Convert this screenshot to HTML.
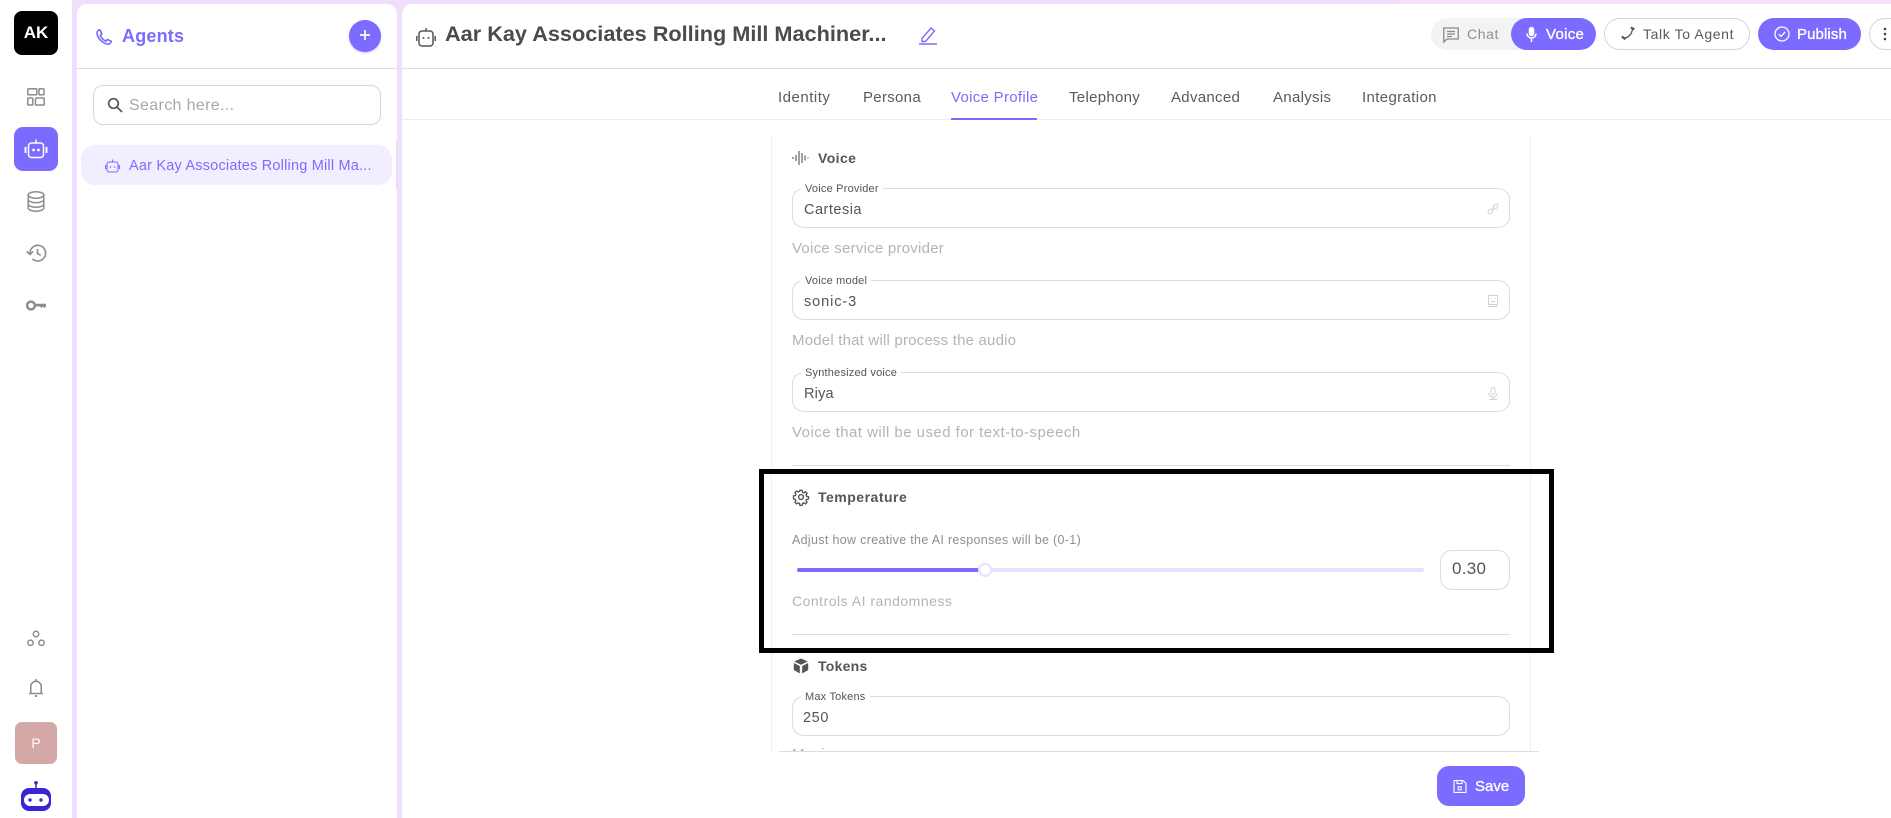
<!DOCTYPE html>
<html><head><meta charset="utf-8"><style>
html,body{margin:0;padding:0;width:1891px;height:818px;overflow:hidden;background:#fff;font-family:"Liberation Sans",sans-serif}
#r{position:absolute;left:0;top:0;width:1891px;height:818px;overflow:hidden;background:#fff}
.a{position:absolute;box-sizing:border-box}
.t{position:absolute;white-space:nowrap;line-height:20px;height:20px}
svg{position:absolute;overflow:visible;fill:none}
.f{position:absolute;left:792px;width:718px;height:40px;border:1px solid #dcdcdc;border-radius:12px;box-sizing:border-box;background:#fff}
.l{position:absolute;left:801px;background:#fff;padding:0 4px;font-size:11px;line-height:12px;color:#555;white-space:nowrap;letter-spacing:.2px}
.v{font-size:14.5px;color:#555;letter-spacing:.5px}
.h{font-size:15px;color:#b4b4b4}
.s{font-size:14px;font-weight:bold;color:#555}
.tab{font-size:15px;color:#5a5a5a;letter-spacing:.3px}
.w{font-size:15px;color:#fff;-webkit-text-stroke:.35px #fff}
</style></head><body><div id="r">
<div class="a" style="left:72px;top:0;width:1819px;height:818px;background:#efdffc"></div>
<div class="a" style="left:1400px;top:0;width:491px;height:4px;background:#f7e0fb"></div>
<div class="a" style="left:0;top:0;width:72px;height:818px;background:#fff"></div>
<div class="a" style="left:72px;top:0;width:20px;height:20px;background:#efdffc;border-radius:12px 0 0 0"></div>
<div class="a" style="left:77px;top:4px;width:320px;height:814px;background:#fff;border-radius:10px 10px 0 0"></div>
<div class="a" style="left:402px;top:4px;width:1489px;height:814px;background:#fff;border-radius:10px 0 0 0"></div>

<!-- rail -->
<div class="a" style="left:14px;top:11px;width:44px;height:44px;background:#000;border-radius:8px"></div>
<div class="t" style="left:14px;width:44px;top:23px;text-align:center;color:#fff;font-weight:bold;font-size:17px">AK</div>
<svg style="left:27px;top:88px" width="18" height="18" viewBox="0 0 18 18" stroke="#8c8c8c" stroke-width="1.5"><rect x=".8" y=".8" width="9" height="6" rx=".8"/><rect x="12" y=".8" width="5" height="6" rx=".8"/><rect x=".8" y="10" width="5" height="7" rx=".8"/><rect x="8.5" y="10" width="8.7" height="7" rx=".8"/></svg>
<div class="a" style="left:14px;top:127px;width:44px;height:44px;background:#7b6cff;border-radius:9px"></div>
<svg style="left:24px;top:138px" width="24" height="22" viewBox="0 0 24 22" stroke="#fff" stroke-width="1.5"><rect x="4.5" y="5" width="15" height="14.5" rx="3"/><path d="M12 5V1.5"/><path d="M1.5 9v6M22.5 9v6" stroke-width="2"/><circle cx="9.600" cy="12" r="1.400" fill="#fff" stroke="none"/><circle cx="14.400" cy="12" r="1.400" fill="#fff" stroke="none"/></svg>
<svg style="left:27px;top:191px" width="18" height="21" viewBox="0 0 18 21" stroke="#8c8c8c" stroke-width="1.5"><ellipse cx="9" cy="4" rx="7.8" ry="3.2"/><path d="M1.2 4v13c0 1.8 3.5 3.2 7.8 3.2s7.8-1.4 7.8-3.2V4M1.2 8.500c0 1.800 3.500 3.200 7.800 3.200s7.800-1.400 7.800-3.200M1.200 13c0 1.800 3.500 3.200 7.800 3.200s7.800-1.400 7.800-3.200"/></svg>
<svg style="left:26px;top:244px" width="20" height="18" viewBox="0 0 20 18" stroke="#8c8c8c" stroke-width="1.6"><path d="M4 9a7.800 7.800 0 1 1 2.400 5.800"/><path d="M.8 7.500L4 10.500 7 7.500" /><path d="M11.500 5v4.500l3.200 1.800"/></svg>
<svg style="left:26px;top:299px" width="20" height="12" viewBox="0 0 20 12"><circle cx="5" cy="6.500" r="3.900" stroke="#8c8c8c" stroke-width="2.500"/><path d="M8.500 4.700h11.500V7.500l-1.500 1.500-1.500-1.500-1.500 1.500-1.500-1.500H8.500z" fill="#8c8c8c"/></svg>
<svg style="left:27px;top:630px" width="18" height="17" viewBox="0 0 18 17" stroke="#8c8c8c" stroke-width="1.500"><circle cx="9" cy="4" r="2.700"/><circle cx="3.500" cy="12.800" r="2.700"/><circle cx="14.500" cy="12.800" r="2.700"/></svg>
<svg style="left:28px;top:678px" width="16" height="20" viewBox="0 0 16 20" stroke="#8c8c8c" stroke-width="1.500"><path d="M1 15.500h14M2.800 15.500V8.500a5.200 5.200 0 0 1 10.400 0v7M8 1v2"/><path d="M7 18h2" stroke-width="2"/></svg>
<div class="a" style="left:15px;top:722px;width:42px;height:42px;background:#d4a8a6;border-radius:7px"></div>
<div class="t" style="left:15px;width:42px;top:733px;text-align:center;color:#fff;font-size:14px">P</div>
<svg style="left:21px;top:781px" width="30" height="30" viewBox="0 0 30 30"><circle cx="15" cy="1.800" r="1.800" fill="#3a25d6"/><path d="M15 3v6" stroke="#3a25d6" stroke-width="1.500"/><rect x="0" y="7" width="30" height="23" rx="8" fill="#3a25d6"/><rect x="3" y="13" width="25" height="12" rx="6" fill="#fff"/><circle cx="9" cy="19" r="1.700" fill="#3a25d6"/><circle cx="20" cy="19" r="1.700" fill="#3a25d6"/></svg>

<!-- agents panel -->
<div class="a" style="left:77px;top:68px;width:320px;height:1px;background:#dedede"></div>
<svg style="left:95px;top:28px" width="18" height="18" viewBox="0 0 24 24" stroke="#7b6cff" stroke-width="2.200"><path d="M6.500 2.500c-2 .3-4 1.800-3.800 4.500C3.500 14 10 20.800 17.500 21.500c2.500.2 3.800-2 4-3.800l-4.800-2.400-2.200 2.200c-3-1.300-6-4.300-7.500-7.500l2.200-2.200z"/></svg>
<div class="t" style="left:122px;top:25px;font-size:18px;font-weight:bold;color:#7b6cff;height:22px;line-height:22px;letter-spacing:.2px">Agents</div>
<div class="a" style="left:349px;top:20px;width:32px;height:32px;border-radius:50%;background:#7b6cff;box-shadow:0 1px 2px rgba(123,108,255,.4)"></div>
<svg style="left:359px;top:29px" width="12" height="12" viewBox="0 0 12 12" stroke="#fff" stroke-width="1.700"><path d="M6 1v10M1 6h10"/></svg>
<div class="a" style="left:93px;top:85px;width:288px;height:40px;border:1px solid #d8d8d8;border-radius:10px"></div>
<svg style="left:107px;top:97px" width="16" height="16" viewBox="0 0 16 16" stroke="#555" stroke-width="1.700"><circle cx="6.500" cy="6.500" r="4.800"/><path d="M10 10l5 5"/></svg>
<div class="t" style="left:129px;top:96px;font-size:16px;color:#a8a8a8;letter-spacing:.35px">Search here...</div>
<div class="a" style="left:81px;top:145px;width:311px;height:40px;background:#f3eeff;border-radius:14px"></div>
<svg style="left:105px;top:158px" width="15" height="15" viewBox="0 0 15 15" stroke="#7b6cff" stroke-width="1.100"><rect x="2" y="4" width="11" height="10" rx="2"/><path d="M7.500 4V1.500M.6 7v4M14.400 7v4"/><circle cx="5.500" cy="9" r=".8" fill="#7b6cff" stroke="none"/><circle cx="9.500" cy="9" r=".8" fill="#7b6cff" stroke="none"/></svg>
<div class="t" style="left:129px;top:156px;font-size:14.500px;color:#7b6cff;letter-spacing:.2px">Aar Kay Associates Rolling Mill Ma...</div>
<div class="a" style="left:396px;top:141px;width:1px;height:48px;background:#e0dce4"></div>

<!-- main header -->
<div class="a" style="left:402px;top:68px;width:1489px;height:1px;background:#dedede"></div>
<div class="a" style="left:402px;top:119px;width:1489px;height:1px;background:#ececec"></div>
<svg style="left:416px;top:26px" width="20" height="20" viewBox="0 0 20 20" stroke="#555" stroke-width="1.500"><rect x="3" y="5" width="14" height="15" rx="3"/><path d="M10 5V2M.8 10v5M19.200 10v5"/><circle cx="7.500" cy="12" r="1" fill="#555" stroke="none"/><circle cx="12.500" cy="12" r="1" fill="#555" stroke="none"/></svg>
<div class="t" style="left:445px;top:21px;font-size:21.700px;font-weight:bold;color:#4d4a48;height:26px;line-height:26px">Aar Kay Associates Rolling Mill Machiner...</div>
<svg style="left:918px;top:26px" width="20" height="19" viewBox="0 0 20 19" stroke="#7b6cff" stroke-width="1.400"><path d="M4 12.500L13 2l3.500 3-9 10.500H4z"/><path d="M1 18h18" stroke-width="1.600"/></svg>

<div class="t tab" style="left:778px;top:88px;letter-spacing:.5px">Identity</div>
<div class="t tab" style="left:863px;top:88px">Persona</div>
<div class="t tab" style="left:951px;top:88px;color:#7b6cff">Voice Profile</div>
<div class="a" style="left:951px;top:118px;width:86px;height:2px;background:#7b6cff"></div>
<div class="t tab" style="left:1069px;top:88px">Telephony</div>
<div class="t tab" style="left:1171px;top:88px">Advanced</div>
<div class="t tab" style="left:1273px;top:88px">Analysis</div>
<div class="t tab" style="left:1362px;top:88px;letter-spacing:.36px">Integration</div>

<!-- toolbar -->
<div class="a" style="left:1431px;top:18px;width:165px;height:32px;background:#f3f3f3;border-radius:16px"></div>
<svg style="left:1443px;top:27px" width="16" height="16" viewBox="0 0 16 16" stroke="#8a8a8a" stroke-width="1.300"><path d="M.8 1h14.400v11H4L.8 15z"/><path d="M4 4.500h8M4 7h8M4 9.500h5"/></svg>
<div class="t" style="left:1467px;top:24px;font-size:14px;color:#8f8f8f;letter-spacing:.6px">Chat</div>
<div class="a" style="left:1511px;top:18px;width:85px;height:32px;background:#7b6cff;border-radius:16px"></div>
<svg style="left:1526px;top:26px" width="11" height="17" viewBox="0 0 11 17" stroke="#fff" stroke-width="1.500"><rect x="3.500" y="1.500" width="4" height="8" rx="2" fill="#fff"/><path d="M1 7.500a4.500 4.500 0 0 0 9 0M5.500 12.500v3.500"/></svg>
<div class="t w" style="left:1546px;top:25px;letter-spacing:.3px">Voice</div>
<div class="a" style="left:1604px;top:18px;width:146px;height:32px;border:1px solid #d6d6d6;border-radius:16px"></div>
<svg style="left:1621px;top:26px" width="14" height="14" viewBox="0 0 14 14" stroke="#555" stroke-width="1.300"><path d="M2 11.800c4.500 1 9-3.500 9.500-9"/><path d="M.8 10.500l3.600 2.800M9.800 1.600l3.600 1.700" stroke-width="2.200"/></svg>
<div class="t" style="left:1643px;top:24px;font-size:14px;color:#5a5a5a;letter-spacing:.62px">Talk To Agent</div>
<div class="a" style="left:1758px;top:18px;width:103px;height:32px;background:#7b6cff;border-radius:16px"></div>
<svg style="left:1774px;top:26px" width="16" height="16" viewBox="0 0 16 16" stroke="#fff" stroke-width="1.300"><circle cx="8" cy="8" r="7"/><path d="M4.800 8.200l2.200 2.200 4.200-4.600"/></svg>
<div class="t w" style="left:1797px;top:25px;letter-spacing:.1px">Publish</div>
<div class="a" style="left:1869px;top:18px;width:40px;height:32px;border:1px solid #d6d6d6;border-radius:16px"></div>
<svg style="left:1883px;top:27px" width="4" height="14" viewBox="0 0 4 14"><circle cx="2" cy="2" r="1.300" fill="#444"/><circle cx="2" cy="7" r="1.300" fill="#444"/><circle cx="2" cy="12" r="1.300" fill="#444"/></svg>

<!-- content frame -->
<div class="a" style="left:771px;top:134px;width:1px;height:617px;background:#efefef"></div>
<div class="a" style="left:1530px;top:134px;width:1px;height:617px;background:#efefef"></div>

<svg style="left:792px;top:150px" width="18" height="16" viewBox="0 0 18 16" stroke="#555" stroke-width="1.100"><path d="M1 7v2M4 5v6M7 1v14M10 3v10M13 5.500v5M16 7.500v1"/></svg>
<div class="t s" style="left:818px;top:148px;letter-spacing:.4px">Voice</div>

<div class="f" style="top:188px"></div>
<div class="l" style="top:183px">Voice Provider</div>
<div class="t v" style="left:804px;top:200px">Cartesia</div>
<svg style="left:1487px;top:203px" width="12" height="12" viewBox="0 0 12 12" stroke="#d2d2d2" stroke-width="1"><ellipse cx="3.500" cy="8.500" rx="2.800" ry="2" transform="rotate(-45 3.500 8.500)"/><ellipse cx="8.500" cy="3.500" rx="2.800" ry="2" transform="rotate(-45 8.500 3.500)"/><path d="M4.500 7.500l3-3"/></svg>
<div class="t h" style="left:792px;top:239px;letter-spacing:.24px">Voice service provider</div>

<div class="f" style="top:280px"></div>
<div class="l" style="top:275px">Voice model</div>
<div class="t v" style="left:804px;top:292px;letter-spacing:.9px">sonic-3</div>
<svg style="left:1488px;top:295px" width="10" height="12" viewBox="0 0 10 12" stroke="#d2d2d2" stroke-width="1"><rect x=".5" y=".5" width="9" height="9"/><path d="M2.500 3.500h1M6.500 3.500h1M3 6.500h4M0 11.500h10"/></svg>
<div class="t h" style="left:792px;top:331px;letter-spacing:.2px">Model that will process the audio</div>

<div class="f" style="top:372px"></div>
<div class="l" style="top:367px">Synthesized voice</div>
<div class="t v" style="left:804px;top:384px;letter-spacing:.2px">Riya</div>
<svg style="left:1488px;top:387px" width="10" height="13" viewBox="0 0 10 13" stroke="#d2d2d2" stroke-width="1"><rect x="3" y=".5" width="4" height="7" rx="2"/><path d="M.8 6a4.200 4.200 0 0 0 8.400 0M5 10.500v2M1 12.500h8"/></svg>
<div class="t h" style="left:792px;top:423px;letter-spacing:.46px">Voice that will be used for text-to-speech</div>

<div class="a" style="left:792px;top:465px;width:718px;height:1px;background:#dedede"></div>

<!-- temperature -->
<svg style="left:793px;top:489px" width="16" height="16" viewBox="0 0 16 16" stroke="#555" stroke-width="1.400"><circle cx="8" cy="8" r="2.400"/><path d="M6.800 1h2.400l.4 2 1.400.6 1.700-1.100 1.700 1.700-1.100 1.700.6 1.400 2 .4v2.400l-2 .4-.6 1.400 1.100 1.700-1.700 1.700-1.700-1.100-1.400.6-.4 2H6.800l-.4-2-1.400-.6-1.700 1.100-1.700-1.700 1.100-1.700-.6-1.400-2-.4V6.800l2-.4.6-1.400-1.100-1.700 1.700-1.700 1.700 1.100 1.400-.6z" transform="translate(.4 .4) scale(.95)"/></svg>
<div class="t s" style="left:818px;top:487px;letter-spacing:.5px">Temperature</div>
<div class="t" style="left:792px;top:530px;font-size:12.500px;color:#8e8e8e;letter-spacing:.32px">Adjust how creative the AI responses will be (0-1)</div>
<div class="a" style="left:797px;top:568px;width:627px;height:4px;background:#e6e2fd;border-radius:2px"></div>
<div class="a" style="left:797px;top:568px;width:184px;height:4px;background:#7b6cff;border-radius:2px"></div>
<div class="a" style="left:978px;top:563px;width:14px;height:14px;background:#fff;border:2px solid #e6e2fd;border-radius:50%"></div>
<div class="a" style="left:1440px;top:550px;width:70px;height:40px;border:1px solid #dcdcdc;border-radius:12px"></div>
<div class="t" style="left:1452px;top:559px;font-size:17px;color:#555;letter-spacing:.3px">0.30</div>
<div class="t" style="left:792px;top:591px;font-size:14px;color:#b4b4b4;letter-spacing:.5px">Controls AI randomness</div>
<div class="a" style="left:792px;top:634px;width:718px;height:1px;background:#dedede"></div>

<!-- tokens -->
<svg style="left:793px;top:658px" width="16" height="16" viewBox="0 0 16 16"><path d="M8 .5l6.800 3L8 6.800 1.200 3.500z" fill="#555"/><path d="M.8 5l6 3v7.500L.8 12z" fill="#555"/><path d="M15.200 5l-6 3v7.500l6-3.500z" fill="#555"/></svg>
<div class="t s" style="left:818px;top:656px;letter-spacing:.25px">Tokens</div>
<div class="f" style="top:696px"></div>
<div class="l" style="top:691px">Max Tokens</div>
<div class="t v" style="left:803px;top:708px;letter-spacing:.6px">250</div>
<div class="a" style="left:792px;top:748px;width:100px;height:3px;overflow:hidden"><div class="t h" style="left:0;top:-3px;letter-spacing:.3px">Maximum</div></div>

<!-- black annotation -->
<div class="a" style="left:759px;top:469px;width:795px;height:184px;border:5px solid #000"></div>

<!-- footer -->
<div class="a" style="left:779px;top:751px;width:760px;height:1px;background:#dedede"></div>
<div class="a" style="left:1437px;top:766px;width:88px;height:40px;background:#7b6cff;border-radius:12px"></div>
<svg style="left:1453px;top:780px" width="14" height="13" viewBox="0 0 14 13" stroke="#fff" stroke-width="1.100"><path d="M1 .6h9l3 2.800v9H1z"/><path d="M4 .6v3h5v-3"/><rect x="5.200" y="6.800" width="3" height="3"/></svg>
<div class="t w" style="left:1475px;top:777px">Save</div>
</div></body></html>
